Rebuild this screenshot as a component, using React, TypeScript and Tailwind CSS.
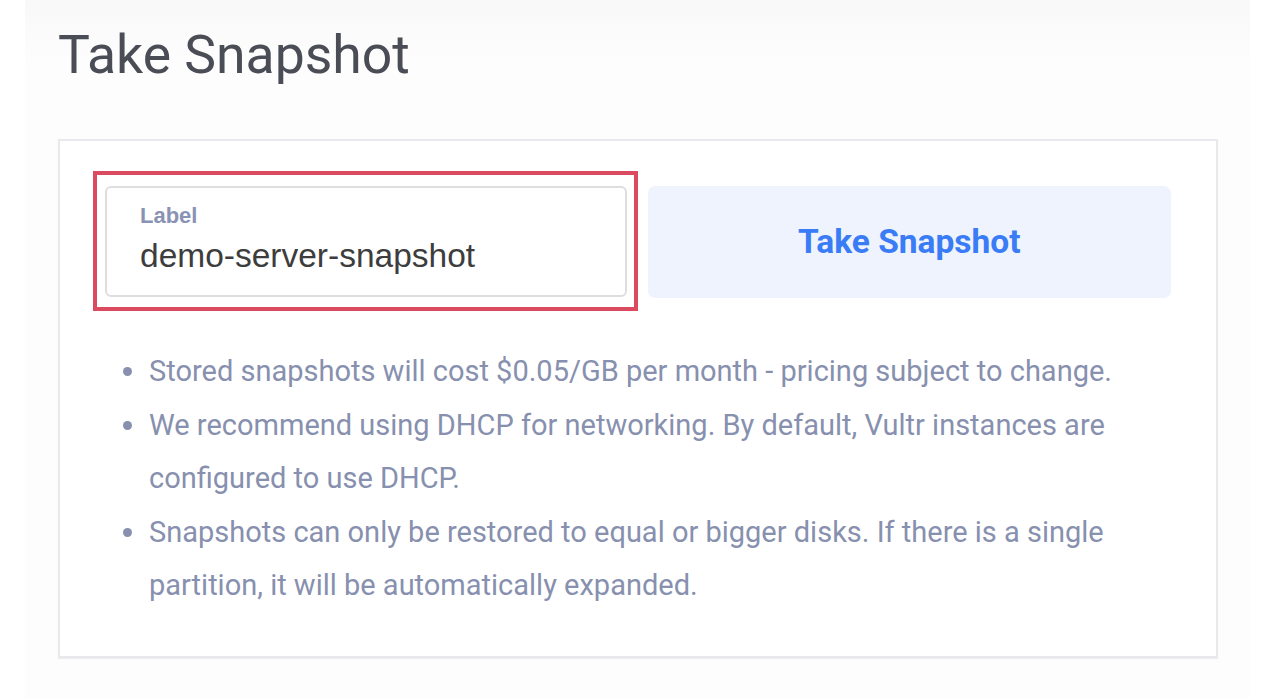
import React from "react";

const bullets = [
  "Stored snapshots will cost $0.05/GB per month - pricing subject to change.",
  "We recommend using DHCP for networking. By default, Vultr instances are configured to use DHCP.",
  "Snapshots can only be restored to equal or bigger disks. If there is a single partition, it will be automatically expanded.",
];

export default function App() {
  return (
    <div className="w-[1280px] h-[698px] bg-white overflow-hidden">
      <div className="ml-[25px] w-[1225px] h-full bg-[linear-gradient(to_bottom,#f8f8f8_0px,#fdfdfd_60px,#fdfdfd_698px)] px-[33px] pt-[27px]">
        <h1
          className="text-[53.5px] leading-[56px] text-[#4a4d55] font-normal"
          style={{ fontFamily: "Roboto, 'Noto Sans', sans-serif" }}
        >
          Take Snapshot
        </h1>
        <div className="mt-[56px] w-[1160px] bg-white border-2 border-[#e9e9ed] shadow-[0_1px_1px_rgba(200,200,220,0.3)] px-[45px] pt-[45px] pb-[43px]">
          <div className="flex gap-[21px]">
            <div className="relative w-[522px] h-[111px]">
              <div className="absolute -left-[12px] -top-[15px] -right-[11px] -bottom-[14px] border-[4px] border-[#dc4a60] pointer-events-none" />
              <div className="h-full w-full rounded-[6px] border-2 border-[#dedede] bg-white pl-[33px] pt-[15px]">
                <div
                  className="text-[22px] leading-[26px] font-bold text-[#8a93b3]"
                  style={{ fontFamily: "'Liberation Sans', Arial, sans-serif" }}
                >
                  Label
                </div>
                <div
                  className="mt-[8px] text-[33.5px] leading-[38px] text-[#3d3d3d]"
                  style={{ fontFamily: "'Liberation Sans', Arial, sans-serif" }}
                >
                  demo-server-snapshot
                </div>
              </div>
            </div>
            <div
              className="w-[524px] h-[112px] rounded-[7px] bg-[#eef3fd] flex items-center justify-center text-[33.5px] font-bold text-[#3a7bf6]"
              style={{ fontFamily: "Roboto, 'Noto Sans', sans-serif" }}
            >
              Take Snapshot
            </div>
          </div>
          <ul
            className="mt-[47px] flex flex-col text-[29px] leading-[53.5px] text-[#8790ae]"
            style={{ fontFamily: "Roboto, 'Noto Sans', sans-serif" }}
          >
            {bullets.map((b) => (
              <li key={b} className="flex">
                <span className="w-[44px] h-[53.5px] shrink-0 flex items-center pl-[18px]">
                  <span className="w-[9px] h-[9px] rounded-full bg-[#8790ae]" />
                </span>
                <span className="w-[980px]">{b}</span>
              </li>
            ))}
          </ul>
        </div>
      </div>
    </div>
  );
}
